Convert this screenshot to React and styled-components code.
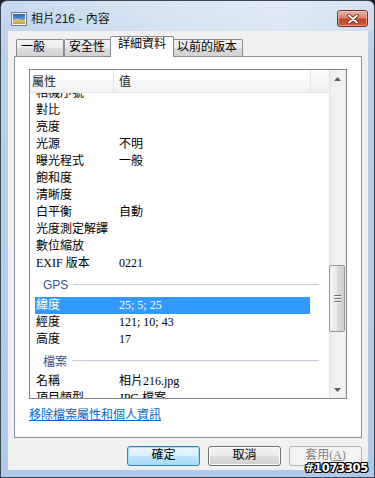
import React from "react";
import styled, { createGlobalStyle } from "styled-components";

const GlobalStyle = createGlobalStyle`
  html, body {
    margin: 0;
    padding: 0;
    background: #1d1f22;
  }
  * {
    box-sizing: border-box;
  }
`;

const UI_FONT = `"Liberation Sans", "Noto Sans CJK TC", sans-serif`;
const LIST_FONT = `"Liberation Serif", "Noto Sans CJK TC", serif`;

const rows = [
    { name: "相機序號" },
    { name: "對比" },
    { name: "亮度" },
    { name: "光源", value: "不明" },
    { name: "曝光程式", value: "一般" },
    { name: "飽和度" },
    { name: "清晰度" },
    { name: "白平衡", value: "自動" },
    { name: "光度測定解譯" },
    { name: "數位縮放" },
    { name: "EXIF 版本", value: "0221" },
    { group: "GPS" },
    { name: "緯度", value: "25; 5; 25", selected: true },
    { name: "經度", value: "121; 10; 43" },
    { name: "高度", value: "17" },
    { group: "檔案" },
    { name: "名稱", value: "相片216.jpg" },
    { name: "項目類型", value: "JPG 檔案" },
];

const tabs = [
    { label: "一般", width: 48 },
    { label: "安全性", width: 48 },
    { label: "詳細資料", width: 64, active: true },
    { label: "以前的版本", width: 71 },
];

const PhotoIcon = () => (
    <svg width="16" height="16" viewBox="0 0 16 16">
        <defs>
            <linearGradient id="sky" x1="0" y1="0" x2="0" y2="1">
                <stop offset="0" stopColor="#2a64b4" />
                <stop offset="1" stopColor="#8cc4ef" />
            </linearGradient>
            <linearGradient id="sand" x1="0" y1="0" x2="0" y2="1">
                <stop offset="0" stopColor="#e9cf78" />
                <stop offset="1" stopColor="#c89a3c" />
            </linearGradient>
        </defs>
        <rect x="0.5" y="1.5" width="15" height="13" fill="#f4f6f8" stroke="#6f7c8c" />
        <rect x="2" y="3" width="12" height="10" fill="url(#sky)" />
        <path d="M2 9 Q6 7.5 9 8.5 T14 8 V13 H2 Z" fill="url(#sand)" />
    </svg>
);

const CloseGlyph = () => (
    <svg width="12" height="10" viewBox="0 0 12 10">
        <path d="M2 1.5 L10 8.5 M10 1.5 L2 8.5" stroke="#6b2116" strokeWidth="3.6" strokeLinecap="round" />
        <path d="M2 1.5 L10 8.5 M10 1.5 L2 8.5" stroke="#ffffff" strokeWidth="2" strokeLinecap="round" />
    </svg>
);

const Arrow = ({ down }) => (
    <svg width="7" height="4" viewBox="0 0 7 4">
        <path d={down ? "M0 0 H7 L3.5 4 Z" : "M0 4 H7 L3.5 0 Z"} fill="#5d5d5d" />
    </svg>
);

const App = () => {
    return (
        <>
            <GlobalStyle />
            <Window>
                <TitleBar>
                    <PhotoIcon />
                    <TitleText>相片216 - 內容</TitleText>
                    <CloseButton>
                        <CloseGlyph />
                    </CloseButton>
                </TitleBar>

                <Client>
                    <TabRow>
                        {tabs.map((t) => (
                            <Tab key={t.label} $active={t.active} $width={t.width}>
                                {t.label}
                            </Tab>
                        ))}
                    </TabRow>

                    <Panel>
                        <ListView>
                            <ListMain>
                                <Header>
                                    <HeaderCell $width={84} $pad={2}>屬性</HeaderCell>
                                    <HeaderCell $width={197} $pad={5}>值</HeaderCell>
                                    <HeaderFill />
                                </Header>
                                <ListBody>
                                    <RowsScroller $offset={-8}>
                                        {rows.map((r, i) =>
                                            r.group ? (
                                                <GroupHeader key={i}>
                                                    <GroupLabel>{r.group}</GroupLabel>
                                                    <GroupLine />
                                                </GroupHeader>
                                            ) : (
                                                <Row key={i} $selected={r.selected}>
                                                    <NameCell>{r.name}</NameCell>
                                                    <ValueCell>{r.value}</ValueCell>
                                                </Row>
                                            )
                                        )}
                                    </RowsScroller>
                                </ListBody>
                            </ListMain>

                            <ScrollBar>
                                <ScrollArrow><Arrow /></ScrollArrow>
                                <ScrollTrack>
                                    <Thumb $top={178} $height={67}>
                                        <Grip /><Grip /><Grip />
                                    </Thumb>
                                </ScrollTrack>
                                <ScrollArrow><Arrow down /></ScrollArrow>
                            </ScrollBar>
                        </ListView>

                        <RemoveLink>移除檔案屬性和個人資訊</RemoveLink>
                    </Panel>

                    <ButtonRow>
                        <DialogButton $variant="default">確定</DialogButton>
                        <DialogButton>取消</DialogButton>
                        <DialogButton $variant="disabled">套用(<u>A</u>)</DialogButton>
                    </ButtonRow>
                </Client>

                <Watermark>#1073305</Watermark>
            </Window>
        </>
    );
};

const Window = styled.div`
    position: relative;
    width: 375px;
    height: 478px;
    display: flex;
    flex-direction: column;
    border: 1px solid #3b4757;
    border-radius: 7px 7px 0 0;
    overflow: hidden;
    background: linear-gradient(to bottom, #c9dbef 0%, #b9d0eb 12%, #b1c9e8 100%);
`;

const TitleBar = styled.div`
    height: 30px;
    flex-shrink: 0;
    display: flex;
    align-items: flex-start;
    padding: 10px 6px 0 10px;
    background: linear-gradient(to right, rgba(255, 255, 255, 0) 0%, rgba(255, 255, 255, 0.3) 45%, rgba(255, 255, 255, 0.45) 75%, rgba(255, 255, 255, 0.2) 100%);
`;

const TitleText = styled.div`
    margin-left: 4px;
    font-family: ${UI_FONT};
    font-size: 12px;
    line-height: 16px;
    color: #1a1a1a;
`;

const CloseButton = styled.div`
    margin-left: auto;
    margin-top: -1px;
    width: 31px;
    height: 17px;
    display: flex;
    align-items: center;
    justify-content: center;
    border: 1px solid #7a2e22;
    border-radius: 3px;
    background: linear-gradient(to bottom, #eab3a6 0%, #d98470 45%, #c4432b 55%, #cf5d3f 100%);
    box-shadow: inset 0 0 0 1px rgba(255, 220, 210, 0.5);
`;

const Client = styled.div`
    flex: 1;
    margin: 0 6px 7px 7px;
    padding: 5px 6px 4px 6px;
    background: #f0f0f0;
    display: flex;
    flex-direction: column;
`;

const TabRow = styled.div`
    position: relative;
    z-index: 1;
    height: 20px;
    flex-shrink: 0;
    display: flex;
    align-items: flex-end;
    padding-left: 2px;
`;

const Tab = styled.div`
    width: ${(p) => p.$width}px;
    height: ${(p) => (p.$active ? 21 : 17)}px;
    margin: ${(p) => (p.$active ? "0 -2px -1px -2px" : "0")};
    position: relative;
    z-index: ${(p) => (p.$active ? 1 : 0)};
    padding-left: ${(p) => (p.$active ? 7 : 4)}px;
    border: 1px solid #898c95;
    border-bottom: none;
    border-radius: 2px 2px 0 0;
    background: ${(p) =>
        p.$active
            ? "#ffffff"
            : "linear-gradient(to bottom, #f3f3f3 0%, #ebebeb 50%, #dddddd 51%, #d2d2d2 100%)"};
    font-family: ${LIST_FONT};
    font-size: 12px;
    line-height: ${(p) => (p.$active ? 14 : 15)}px;
    color: #000;
    white-space: nowrap;
`;

const Panel = styled.div`
    height: 382px;
    flex-shrink: 0;
    border: 1px solid #898c95;
    background: #ffffff;
    padding: 12px 14px 0 14px;
    display: flex;
    flex-direction: column;
`;

const ListView = styled.div`
    height: 330px;
    flex-shrink: 0;
    border: 1px solid #828790;
    display: flex;
    background: #fff;
`;

const ListMain = styled.div`
    flex: 1;
    min-width: 0;
    display: flex;
    flex-direction: column;
`;

const Header = styled.div`
    height: 23px;
    flex-shrink: 0;
    display: flex;
    border-bottom: 1px solid #e2e4e8;
    background: linear-gradient(to bottom, #ffffff 0%, #ffffff 45%, #f6f7f8 46%, #f2f3f5 100%);
`;

const HeaderCell = styled.div`
    width: ${(p) => p.$width}px;
    padding-left: ${(p) => p.$pad}px;
    padding-top: 2px;
    border-right: 1px solid #e3e5e8;
    font-family: ${LIST_FONT};
    font-size: 12px;
    line-height: 20px;
    color: #1e1e1e;
`;

const HeaderFill = styled.div`
    flex: 1;
    background: linear-gradient(to bottom, #fbfbfb, #f0f1f3);
`;

const ListBody = styled.div`
    flex: 1;
    overflow: hidden;
`;

const RowsScroller = styled.div`
    margin-top: ${(p) => p.$offset}px;
`;

const Row = styled.div`
    height: 17px;
    width: 275px;
    margin-left: 5px;
    display: flex;
    background: ${(p) => (p.$selected ? "#3399ff" : "transparent")};
    color: ${(p) => (p.$selected ? "#ffffff" : "#000000")};
    font-family: ${LIST_FONT};
    font-size: 12px;
    line-height: 17px;
    white-space: nowrap;
`;

const NameCell = styled.div`
    width: 84px;
    padding-left: 1px;
    flex-shrink: 0;
`;

const ValueCell = styled.div`
    flex: 1;
`;

const GroupHeader = styled.div`
    height: 25px;
    display: flex;
    align-items: center;
    padding: 0 10px 0 13px;
`;

const GroupLabel = styled.span`
    font-family: ${UI_FONT};
    font-size: 12px;
    color: #3d5589;
`;

const GroupLine = styled.div`
    flex: 1;
    height: 1px;
    margin-left: 5px;
    background: #c2cddb;
`;

const ScrollBar = styled.div`
    width: 17px;
    flex-shrink: 0;
    display: flex;
    flex-direction: column;
    background: linear-gradient(to right, #e4e4e4 0%, #f0f0f0 15%, #f2f2f2 85%, #e8e8e8 100%);
`;

const ScrollArrow = styled.div`
    height: 17px;
    flex-shrink: 0;
    display: flex;
    align-items: center;
    justify-content: center;
`;

const ScrollTrack = styled.div`
    flex: 1;
    display: flex;
    flex-direction: column;
`;

const Thumb = styled.div`
    margin: ${(p) => p.$top}px 1px 0 0;
    height: ${(p) => p.$height}px;
    border: 1px solid #979797;
    border-radius: 2px;
    background: linear-gradient(to right, #f4f4f4 0%, #e9e9e9 50%, #d9d9d9 51%, #cfcfcf 100%);
    display: flex;
    flex-direction: column;
    align-items: center;
    justify-content: center;
    gap: 1px;
`;

const Grip = styled.div`
    width: 7px;
    height: 1px;
    background: #6e6e6e;
    box-shadow: 0 1px 0 #f8f8f8;
    margin-bottom: 1px;
`;

const RemoveLink = styled.div`
    margin-top: 9px;
    font-family: ${LIST_FONT};
    font-size: 12px;
    line-height: 14px;
    color: #0066cc;
    text-decoration: underline;
    align-self: flex-start;
`;

const ButtonRow = styled.div`
    margin-top: 8px;
    height: 20px;
    flex-shrink: 0;
    display: flex;
    justify-content: flex-end;
    gap: 8px;
`;

const buttonLook = {
    default: `
        border: 1px solid #3c7fb1;
        background: linear-gradient(to bottom, #eaf6fd 0%, #d9f0fc 50%, #bee6fd 51%, #a7d9f5 100%);
        box-shadow: inset 0 0 0 1px #9fe2f7;
        color: #000;
    `,
    normal: `
        border: 1px solid #707070;
        background: linear-gradient(to bottom, #f2f2f2 0%, #ebebeb 50%, #dddddd 51%, #cfcfcf 100%);
        box-shadow: inset 0 0 0 1px #fcfcfc;
        color: #000;
    `,
    disabled: `
        border: 1px solid #adb2b5;
        background: #f4f4f4;
        color: #838383;
    `,
};

const DialogButton = styled.div`
    width: 73px;
    height: 20px;
    border-radius: 3px;
    display: flex;
    align-items: center;
    justify-content: center;
    font-family: ${LIST_FONT};
    font-size: 12px;
    line-height: 17px;
    padding-bottom: 1px;
    ${(p) => buttonLook[p.$variant || "normal"]}

    u {
        text-decoration: underline;
    }
`;

const Watermark = styled.div`
    position: absolute;
    right: 6px;
    bottom: 3px;
    font-family: "DejaVu Sans", sans-serif;
    font-weight: bold;
    font-size: 11.5px;
    line-height: 12px;
    letter-spacing: -0.3px;
    color: #ffffff;
    text-shadow: -1px -1px 0 #000, 1px -1px 0 #000, -1px 1px 0 #000, 1px 1px 0 #000,
        0 1px 0 #000, 0 -1px 0 #000, 1px 0 0 #000, -1px 0 0 #000;
`;

export default App;
